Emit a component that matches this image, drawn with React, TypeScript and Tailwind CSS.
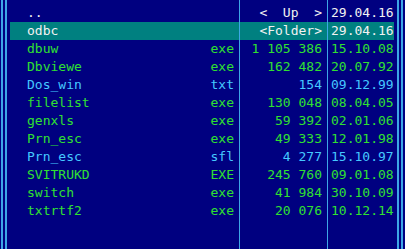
import React from "react";

type Row = { name: string; ext: string; size: string; date: string; color: string; sel?: boolean };

const W = "text-[#f2f2f2]";
const G = "text-[#30e030]";
const C = "text-[#45c8ff]";

const rows: Row[] = [
  { name: "..", ext: "", size: "<  Up  >", date: "29.04.16", color: W },
  { name: "odbc", ext: "", size: "<Folder>", date: "29.04.16", color: W, sel: true },
  { name: "dbuw", ext: "exe", size: "1 105 386", date: "15.10.08", color: G },
  { name: "Dbviewe", ext: "exe", size: "162 482", date: "20.07.92", color: G },
  { name: "Dos_win", ext: "txt", size: "154", date: "09.12.99", color: C },
  { name: "filelist", ext: "exe", size: "130 048", date: "08.04.05", color: G },
  { name: "genxls", ext: "exe", size: "59 392", date: "02.01.06", color: G },
  { name: "Prn_esc", ext: "exe", size: "49 333", date: "12.01.98", color: G },
  { name: "Prn_esc", ext: "sfl", size: "4 277", date: "15.10.97", color: C },
  { name: "SVITRUKD", ext: "EXE", size: "245 760", date: "09.01.08", color: G },
  { name: "switch", ext: "exe", size: "41 984", date: "30.10.09", color: G },
  { name: "txtrtf2", ext: "exe", size: "20 076", date: "10.12.14", color: G },
];

const font = { fontFamily: '"DejaVu Sans Mono", "Liberation Mono", monospace' };

export default function App() {
  return (
    <div
      className="w-[405px] h-[249px] bg-[#000080] flex overflow-hidden text-[13px] leading-[18px] whitespace-pre"
      style={font}
    >
      {/* left double border */}
      <div className="ml-[1px] w-[6px] h-full border-x-2 border-[#3ea6e6]" />
      {/* name column */}
      <div className="w-[232px] flex flex-col pt-[4px]">
        {rows.map((r, i) => (
          <div
            key={i}
            className={`h-[18px] ml-[3px] pl-[17px] pr-[5px] flex justify-between ${r.sel ? "bg-[#008080]" : ""} ${r.color}`}
          >
            <span>{r.name}</span>
            <span>{r.ext}</span>
          </div>
        ))}
      </div>
      <div className="w-[1px] h-full bg-[#3ea6e6]" />
      {/* size column */}
      <div className="w-[87px] flex flex-col pt-[4px]">
        {rows.map((r, i) => (
          <div
            key={i}
            className={`h-[18px] pr-[5px] flex justify-end ${r.sel ? "bg-[#008080]" : ""} ${r.color}`}
          >
            {r.size}
          </div>
        ))}
      </div>
      <div className="w-[1px] h-full bg-[#3ea6e6]" />
      {/* date column */}
      <div className="w-[66px] flex flex-col pt-[4px]">
        {rows.map((r, i) => (
          <div
            key={i}
            className={`h-[18px] pl-[3px] ${r.sel ? "bg-[#008080]" : ""} ${r.color}`}
          >
            {r.date}
          </div>
        ))}
      </div>
      {/* right double border */}
      <div className="ml-[3px] w-[6px] h-full border-x-2 border-[#3ea6e6]" />
    </div>
  );
}
